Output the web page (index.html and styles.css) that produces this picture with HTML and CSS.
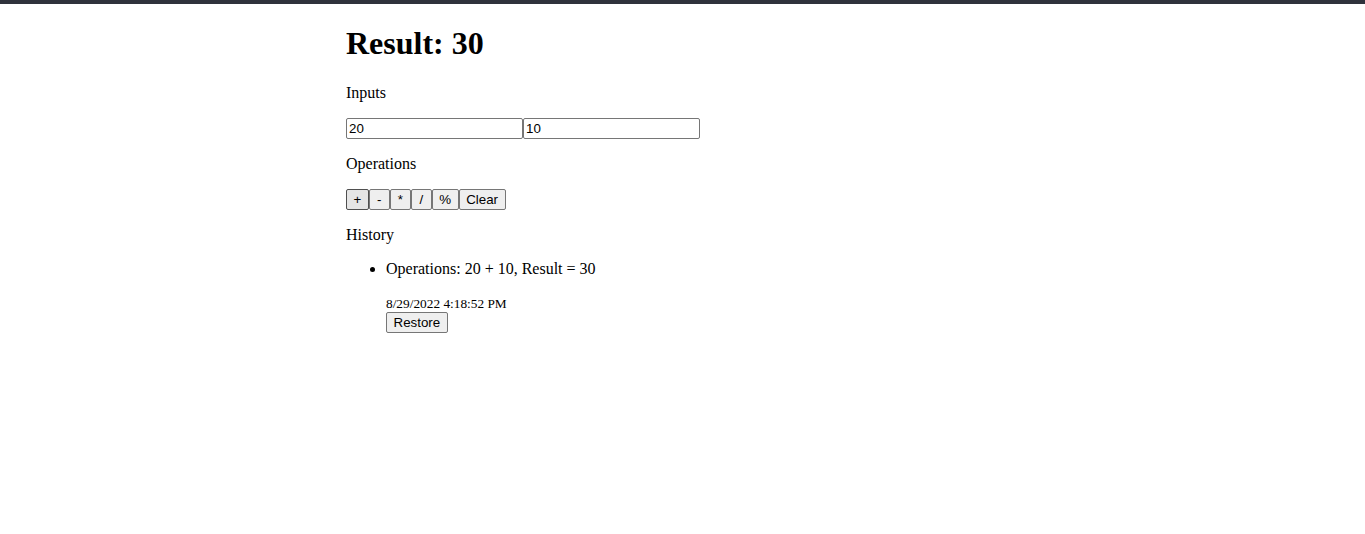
FILE: index.html
```html
<!DOCTYPE html>
<html>
<head>
<meta charset="utf-8">
<title>Calculator</title>
<link rel="stylesheet" href="styles.css">
</head>
<body>
<div class="topbar"></div>
<main class="app">
  <h1 class="result">Result: 30</h1>
  <p class="label">Inputs</p>
  <div class="inputs"><input class="num" type="text" value="20"><input class="num" type="text" value="10"></div>
  <p class="label">Operations</p>
  <div class="ops"><button class="btn btn-active">+</button><button class="btn">-</button><button class="btn">*</button><button class="btn">/</button><button class="btn">%</button><button class="btn">Clear</button></div>
  <p class="label">History</p>
  <ul class="history">
    <li class="entry">
      <p class="entry-text">Operations: 20 + 10, Result = 30</p>
      <div class="entry-meta"><small class="time">8/29/2022 4:18:52 PM</small><br><button class="btn">Restore</button></div>
    </li>
  </ul>
</main>
</body>
</html>
```
FILE: styles.css
```css
html, body {
  margin: 0;
  padding: 0;
  background: #fff;
}
body {
  font-family: "Liberation Serif", "Times New Roman", serif;
  font-size: 16px;
  color: #000;
}
.topbar {
  height: 4px;
  background: #2f323c;
}
.app {
  width: 673px;
  margin: 0 auto;
}
.result {
  font-size: 32px;
  font-weight: bold;
  margin: 21.44px 0 21.6px;
}
.label {
  margin: 16px 0;
}
.inputs {
  display: flex;
}
.num {
  box-sizing: border-box;
  width: 177px;
  height: 21px;
  margin: 0;
  padding: 1px 2px;
  border: 1px solid #767676;
  border-radius: 2px;
  font-family: "Liberation Sans", Arial, sans-serif;
  font-size: 13.333px;
  color: #000;
  background: #fff;
}
.ops {
  display: flex;
}
.btn {
  box-sizing: border-box;
  height: 21px;
  min-width: 21px;
  margin: 0;
  padding: 1px 6.5px;
  border: 1px solid #767676;
  border-radius: 2px;
  background: #efefef;
  font-family: "Liberation Sans", Arial, sans-serif;
  font-size: 13.333px;
  color: #000;
}
.btn-active {
  background: #e5e5e5;
  border-color: #4f4f4f;
}
.history {
  margin: 16px 0;
  padding-left: 40px;
}
.entry-text {
  margin: 16px 0;
}
.time {
  font-size: 13.333px;
}
```
